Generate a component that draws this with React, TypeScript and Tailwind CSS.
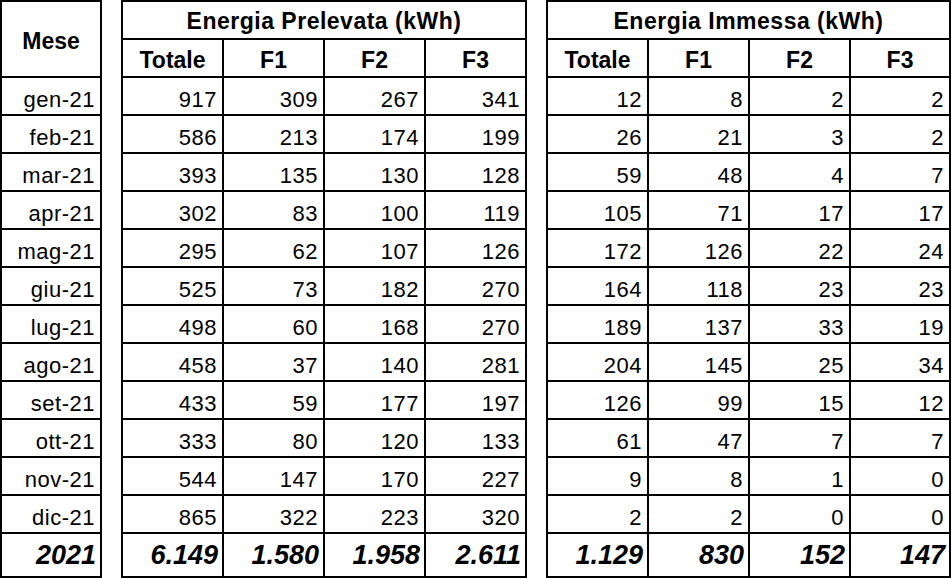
const rows: [string, string[], string[]][] = [
  ['gen-21', ['917', '309', '267', '341'], ['12', '8', '2', '2']],
  ['feb-21', ['586', '213', '174', '199'], ['26', '21', '3', '2']],
  ['mar-21', ['393', '135', '130', '128'], ['59', '48', '4', '7']],
  ['apr-21', ['302', '83', '100', '119'], ['105', '71', '17', '17']],
  ['mag-21', ['295', '62', '107', '126'], ['172', '126', '22', '24']],
  ['giu-21', ['525', '73', '182', '270'], ['164', '118', '23', '23']],
  ['lug-21', ['498', '60', '168', '270'], ['189', '137', '33', '19']],
  ['ago-21', ['458', '37', '140', '281'], ['204', '145', '25', '34']],
  ['set-21', ['433', '59', '177', '197'], ['126', '99', '15', '12']],
  ['ott-21', ['333', '80', '120', '133'], ['61', '47', '7', '7']],
  ['nov-21', ['544', '147', '170', '227'], ['9', '8', '1', '0']],
  ['dic-21', ['865', '322', '223', '320'], ['2', '2', '0', '0']],
]

const totals = {
  prelevata: ['6.149', '1.580', '1.958', '2.611'],
  immessa: ['1.129', '830', '152', '147'],
}

const cols = ['Totale', 'F1', 'F2', 'F3']

const cell = 'border-t-2 border-l-2 border-black'
const dataCell = `${cell} flex items-end justify-end pr-[5px] pb-[3px] text-[22px] leading-[22px] tracking-[0.5px]`
const totalCell = `${cell} flex items-center justify-end pr-[4px] text-[27px] leading-[27px] font-bold italic`
const headCell = `${cell} flex items-center justify-center text-[23px] leading-[23px] font-bold`

function EnergyTable({
  title,
  values,
  total,
  gridCols,
}: {
  title: string
  values: string[][]
  total: string[]
  gridCols: string
}) {
  return (
    <div className={`grid ${gridCols} grid-rows-[38px_38px_repeat(12,38px)_44px] border-r-2 border-b-2 border-black`}>
      <div className={`${headCell} col-span-4 pt-[3px] tracking-[0.5px]`}>{title}</div>
      {cols.map((c) => (
        <div key={c} className={`${headCell} pt-[5px]`}>
          {c}
        </div>
      ))}
      {values.map((vals, i) =>
        vals.map((v, j) => (
          <div key={`${i}-${j}`} className={dataCell}>
            {v}
          </div>
        ))
      )}
      {total.map((v, j) => (
        <div key={j} className={totalCell}>
          {v}
        </div>
      ))}
    </div>
  )
}

export default function App() {
  return (
    <div
      className="flex gap-[19px] w-[952px] h-[578px] bg-white text-black"
      style={{ fontFamily: '"Liberation Sans", Arial, sans-serif' }}
    >
      <div className="grid grid-cols-[100px] grid-rows-[38px_38px_repeat(12,38px)_44px] border-r-2 border-b-2 border-black">
        <div className={`${headCell} row-span-2 pt-[5px]`}>Mese</div>
        {rows.map(([m]) => (
          <div key={m} className={dataCell}>
            {m}
          </div>
        ))}
        <div className={totalCell}>2021</div>
      </div>

      <EnergyTable
        title="Energia Prelevata (kWh)"
        values={rows.map((r) => r[1])}
        total={totals.prelevata}
        gridCols="grid-cols-[101px_101px_101px_101px]"
      />

      <EnergyTable
        title="Energia Immessa (kWh)"
        values={rows.map((r) => r[2])}
        total={totals.immessa}
        gridCols="grid-cols-[101px_101px_101px_100px]"
      />
    </div>
  )
}
